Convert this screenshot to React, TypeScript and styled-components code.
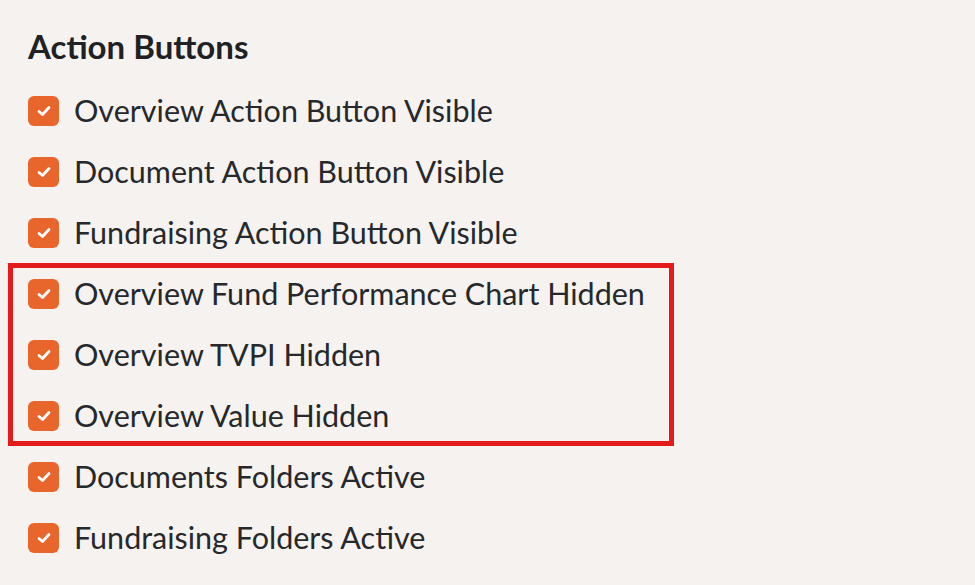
import styled, { createGlobalStyle } from "styled-components";

const Global = createGlobalStyle`
  html, body {
    margin: 0;
    background: #f5f2ef;
  }
  body {
    font-family: Lato, "Liberation Sans", sans-serif;
    color: #26282b;
  }
`;

const Panel = styled.div`
  padding: 24px 0 0 28px;
`;

const Heading = styled.h2`
  margin: 0 0 12px 0;
  font-size: 33px;
  font-weight: 700;
  line-height: 44px;
  color: #1f2124;
`;

const List = styled.div`
  display: flex;
  flex-direction: column;
`;

const Highlight = styled.div`
  display: flex;
  flex-direction: column;
  margin-left: -20px;
  padding-left: 20px;
  width: 646px;
  outline: 5px solid #e31b1b;
  outline-offset: -5px;
`;

const Row = styled.label`
  display: flex;
  align-items: center;
  gap: 15px;
  height: 61px;
  font-size: 30.5px;
  line-height: 1;
`;

const Box = styled.span`
  display: flex;
  align-items: center;
  justify-content: center;
  width: 31px;
  height: 30px;
  border-radius: 6px;
  background: #e8652b;
  flex-shrink: 0;
`;

const Check = () => (
  <Box>
    <svg width="14" height="12" viewBox="0 0 14 12">
      <polyline
        points="2,6.5 5.5,9.5 12,2.5"
        fill="none"
        stroke="#fff"
        strokeWidth="2.8"
        strokeLinecap="round"
        strokeLinejoin="round"
      />
    </svg>
  </Box>
);

const Item = ({ label }: { label: string }) => (
  <Row>
    <Check />
    <span>{label}</span>
  </Row>
);

export default function App() {
  return (
    <>
      <Global />
      <Panel>
        <Heading>Action Buttons</Heading>
        <List>
          <Item label="Overview Action Button Visible" />
          <Item label="Document Action Button Visible" />
          <Item label="Fundraising Action Button Visible" />
          <Highlight>
            <Item label="Overview Fund Performance Chart Hidden" />
            <Item label="Overview TVPI Hidden" />
            <Item label="Overview Value Hidden" />
          </Highlight>
          <Item label="Documents Folders Active" />
          <Item label="Fundraising Folders Active" />
        </List>
      </Panel>
    </>
  );
}
